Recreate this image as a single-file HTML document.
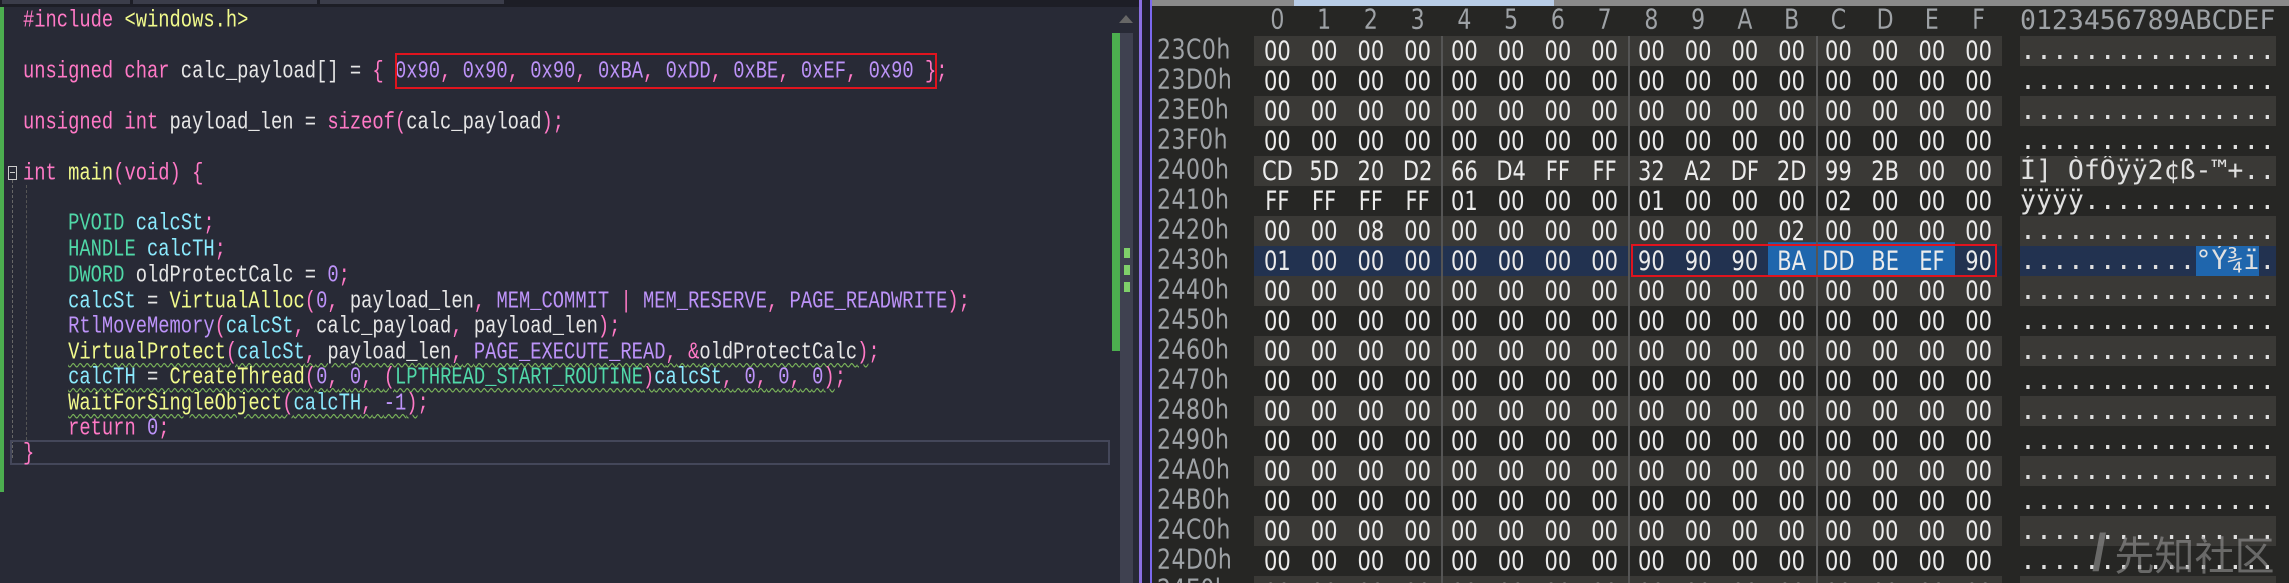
<!DOCTYPE html>
<html style="overflow:hidden;width:2289px;height:583px"><head><meta charset="utf-8"><style>
*{margin:0;padding:0;box-sizing:border-box}
body{width:2289px;height:583px;overflow:hidden;background:#262624;position:relative}
#ed{position:absolute;left:0;top:0;width:1139px;height:583px;background:#282a36;overflow:hidden}
.cl{position:absolute;left:23px;font-family:"Liberation Mono",monospace;font-size:18.8px;white-space:pre;color:#e6e6e6;line-height:26px;height:26px;transform:scaleY(1.28);transform-origin:0 50%}
.k{color:#ff79c6}.n{color:#bd93f9}.t{color:#50d8a8}.f{color:#f1fa8c}.v{color:#8be9fd}.y{color:#f1fa8c}
.sq{text-decoration:underline wavy #7ab35a;text-decoration-thickness:1px;text-underline-offset:3px}
#hx{position:absolute;left:1152px;top:0;width:1137px;height:583px;background:#262624;font-family:"DejaVu Sans",sans-serif;overflow:hidden}
.r{position:absolute;left:0;width:1137px;height:30px}
.off{position:absolute;left:5px;top:0;font-size:22px;color:#9ea2a6;line-height:30px;transform:scale(1.0,1.25);transform-origin:0 50%;letter-spacing:0.5px}
.b{position:absolute;top:0;height:30px;left:102px;width:748px;display:flex}
.b span{width:46.75px;text-align:center;font-size:21px;line-height:30px;color:#ececec;transform:scaleY(1.25)}
.a{position:absolute;top:0;left:868px;width:256px;height:30px;font-family:"DejaVu Sans Mono",monospace;font-size:26.5px;line-height:30px;color:#e0e0e0;white-space:pre;overflow:hidden}
.L .b,.L .a{background:#3a3936}
</style></head><body>
<div id="ed">
<div style="position:absolute;left:0;top:0;width:1139px;height:7px;background:#1d1e26"></div>
<div style="position:absolute;left:2px;top:0;width:128px;height:4px;background:#3b3d4a"></div>
<div style="position:absolute;left:133px;top:0;width:184px;height:4px;background:#3b3d4a"></div>
<div style="position:absolute;left:320px;top:0;width:184px;height:4px;background:#3b3d4a"></div>
<div style="position:absolute;left:0;top:7px;width:4px;height:485px;background:#4cae4f"></div>
<div style="position:absolute;left:1112px;top:33px;width:8px;height:318px;background:#4cae4f"></div>
<div style="position:absolute;left:1120px;top:33px;width:13px;height:550px;background:#3f4150"></div>
<div style="position:absolute;left:1124px;top:248px;width:6px;height:10px;background:#7fd06a"></div>
<div style="position:absolute;left:1124px;top:265px;width:6px;height:10px;background:#7fd06a"></div>
<div style="position:absolute;left:1124px;top:282px;width:6px;height:10px;background:#7fd06a"></div>
<div style="position:absolute;left:1119px;top:15px;width:0;height:0;border-left:7px solid transparent;border-right:7px solid transparent;border-bottom:8px solid #666"></div>
<div style="position:absolute;left:8px;top:166px;width:9px;height:14px;border:1px solid #ccc"></div>
<div style="position:absolute;left:10px;top:172px;width:5px;height:1px;background:#ccc"></div>
<div style="position:absolute;left:12px;top:180px;width:1px;height:278px;border-left:1px dashed #666"></div>
<div style="position:absolute;left:26px;top:185px;width:1px;height:255px;border-left:1px dashed #555"></div>
<div style="position:absolute;left:10px;top:440px;width:1100px;height:25px;border:2px solid #44475a"></div>
<div class="cl" style="top:7px"><span class="k">#include</span> <span class="y">&lt;windows.h&gt;</span></div>
<div class="cl" style="top:58px"><span class="k">unsigned char</span> calc_payload[] = <span class="k">{</span> <span class="n">0x90</span><span class="k">,</span> <span class="n">0x90</span><span class="k">,</span> <span class="n">0x90</span><span class="k">,</span> <span class="n">0xBA</span><span class="k">,</span> <span class="n">0xDD</span><span class="k">,</span> <span class="n">0xBE</span><span class="k">,</span> <span class="n">0xEF</span><span class="k">,</span> <span class="n">0x90</span> <span class="k">};</span></div>
<div style="position:absolute;left:395px;top:53px;width:542px;height:36px;border:2px solid #e0141e"></div>
<div class="cl" style="top:109px"><span class="k">unsigned int</span> payload_len = <span class="k">sizeof(</span>calc_payload<span class="k">);</span></div>
<div class="cl" style="top:160px"><span class="k">int</span> <span class="y">main</span><span class="k">(void)</span> <span class="k">{</span></div>
<div class="cl" style="top:210px">    <span class="t">PVOID</span> <span class="v">calcSt</span><span class="k">;</span></div>
<div class="cl" style="top:236px">    <span class="t">HANDLE</span> <span class="v">calcTH</span><span class="k">;</span></div>
<div class="cl" style="top:262px">    <span class="t">DWORD</span> oldProtectCalc = <span class="n">0</span><span class="k">;</span></div>
<div class="cl" style="top:288px">    <span class="v">calcSt</span> = <span class="f">VirtualAlloc</span><span class="k">(</span><span class="n">0</span><span class="k">,</span> payload_len<span class="k">,</span> <span class="n">MEM_COMMIT</span> <span class="k">|</span> <span class="n">MEM_RESERVE</span><span class="k">,</span> <span class="n">PAGE_READWRITE</span><span class="k">);</span></div>
<div class="cl" style="top:313px">    <span class="n">RtlMoveMemory</span><span class="k">(</span><span class="v">calcSt</span><span class="k">,</span> calc_payload<span class="k">,</span> payload_len<span class="k">);</span></div>
<div class="cl" style="top:339px">    <span class="sq"><span class="f">VirtualProtect</span><span class="k">(</span><span class="v">calcSt</span><span class="k">,</span> payload_len<span class="k">,</span> <span class="n">PAGE_EXECUTE_READ</span><span class="k">,</span> <span class="k">&amp;</span>oldProtectCalc<span class="k">)</span></span><span class="k">;</span></div>
<div class="cl" style="top:364px">    <span class="sq"><span class="v">calcTH</span> = <span class="f">CreateThread</span><span class="k">(</span><span class="n">0</span><span class="k">,</span> <span class="n">0</span><span class="k">,</span> <span class="k">(</span><span class="t">LPTHREAD_START_ROUTINE</span><span class="k">)</span><span class="v">calcSt</span><span class="k">,</span> <span class="n">0</span><span class="k">,</span> <span class="n">0</span><span class="k">,</span> <span class="n">0</span><span class="k">)</span></span><span class="k">;</span></div>
<div class="cl" style="top:390px">    <span class="sq"><span class="f">WaitForSingleObject</span><span class="k">(</span><span class="v">calcTH</span><span class="k">,</span> <span class="n">-1</span><span class="k">)</span></span><span class="k">;</span></div>
<div class="cl" style="top:415px">    <span class="k">return</span> <span class="n">0</span><span class="k">;</span></div>
<div class="cl" style="top:440px"><span class="k">}</span></div>
</div>
<div style="position:absolute;left:1139px;top:0;width:3px;height:583px;background:#8a6fe0"></div>
<div style="position:absolute;left:1142px;top:0;width:8px;height:583px;background:#1e1e2a"></div>
<div style="position:absolute;left:1150px;top:0;width:2px;height:583px;background:#7b68ee"></div>
<div id="hx">
<div style="position:absolute;left:0;top:0;width:1137px;height:6px;background:#8a8a8a"></div>
<div style="position:absolute;left:142px;top:0;width:260px;height:6px;background:#b8cce6"></div>
<div style="position:absolute;left:102px;top:6px;width:1030px;height:28px;font-size:22px;color:#9ea2a6;line-height:30px">
<span style="position:absolute;left:0;display:flex;transform:scaleY(1.25)"><span style="width:46.75px;text-align:center">0</span><span style="width:46.75px;text-align:center">1</span><span style="width:46.75px;text-align:center">2</span><span style="width:46.75px;text-align:center">3</span><span style="width:46.75px;text-align:center">4</span><span style="width:46.75px;text-align:center">5</span><span style="width:46.75px;text-align:center">6</span><span style="width:46.75px;text-align:center">7</span><span style="width:46.75px;text-align:center">8</span><span style="width:46.75px;text-align:center">9</span><span style="width:46.75px;text-align:center">A</span><span style="width:46.75px;text-align:center">B</span><span style="width:46.75px;text-align:center">C</span><span style="width:46.75px;text-align:center">D</span><span style="width:46.75px;text-align:center">E</span><span style="width:46.75px;text-align:center">F</span></span>
<span style="position:absolute;left:766px;font-family:'DejaVu Sans Mono',monospace;font-size:26.5px">0123456789ABCDEF</span></div>

<div class="r L" style="top:36px"><div class="off">23C0h</div><div class="b"><span>00</span><span>00</span><span>00</span><span>00</span><span>00</span><span>00</span><span>00</span><span>00</span><span>00</span><span>00</span><span>00</span><span>00</span><span>00</span><span>00</span><span>00</span><span>00</span></div><div class="a">................</div></div>
<div class="r" style="top:66px"><div class="off">23D0h</div><div class="b"><span>00</span><span>00</span><span>00</span><span>00</span><span>00</span><span>00</span><span>00</span><span>00</span><span>00</span><span>00</span><span>00</span><span>00</span><span>00</span><span>00</span><span>00</span><span>00</span></div><div class="a">................</div></div>
<div class="r L" style="top:96px"><div class="off">23E0h</div><div class="b"><span>00</span><span>00</span><span>00</span><span>00</span><span>00</span><span>00</span><span>00</span><span>00</span><span>00</span><span>00</span><span>00</span><span>00</span><span>00</span><span>00</span><span>00</span><span>00</span></div><div class="a">................</div></div>
<div class="r" style="top:126px"><div class="off">23F0h</div><div class="b"><span>00</span><span>00</span><span>00</span><span>00</span><span>00</span><span>00</span><span>00</span><span>00</span><span>00</span><span>00</span><span>00</span><span>00</span><span>00</span><span>00</span><span>00</span><span>00</span></div><div class="a">................</div></div>
<div class="r L" style="top:156px"><div class="off">2400h</div><div class="b"><span>CD</span><span>5D</span><span>20</span><span>D2</span><span>66</span><span>D4</span><span>FF</span><span>FF</span><span>32</span><span>A2</span><span>DF</span><span>2D</span><span>99</span><span>2B</span><span>00</span><span>00</span></div><div class="a">Í] ÒfÔÿÿ2¢ß-™+..</div></div>
<div class="r" style="top:186px"><div class="off">2410h</div><div class="b"><span>FF</span><span>FF</span><span>FF</span><span>FF</span><span>01</span><span>00</span><span>00</span><span>00</span><span>01</span><span>00</span><span>00</span><span>00</span><span>02</span><span>00</span><span>00</span><span>00</span></div><div class="a">ÿÿÿÿ............</div></div>
<div class="r L" style="top:216px"><div class="off">2420h</div><div class="b"><span>00</span><span>00</span><span>08</span><span>00</span><span>00</span><span>00</span><span>00</span><span>00</span><span>00</span><span>00</span><span>00</span><span>02</span><span>00</span><span>00</span><span>00</span><span>00</span></div><div class="a">................</div></div>
<div class="r" style="top:246px"><div class="off">2430h</div><div class="b" style="background:#223250"><span>01</span><span>00</span><span>00</span><span>00</span><span>00</span><span>00</span><span>00</span><span>00</span><span>90</span><span>90</span><span>90</span><span style="background:#1f66ad">BA</span><span style="background:#1f66ad">DD</span><span style="background:#1f66ad">BE</span><span style="background:#1f66ad">EF</span><span>90</span></div><div class="a" style="background:#223250">...........<span style="background:#1f66ad">°Ý¾ï</span>.</div></div>
<div class="r L" style="top:276px"><div class="off">2440h</div><div class="b"><span>00</span><span>00</span><span>00</span><span>00</span><span>00</span><span>00</span><span>00</span><span>00</span><span>00</span><span>00</span><span>00</span><span>00</span><span>00</span><span>00</span><span>00</span><span>00</span></div><div class="a">................</div></div>
<div class="r" style="top:306px"><div class="off">2450h</div><div class="b"><span>00</span><span>00</span><span>00</span><span>00</span><span>00</span><span>00</span><span>00</span><span>00</span><span>00</span><span>00</span><span>00</span><span>00</span><span>00</span><span>00</span><span>00</span><span>00</span></div><div class="a">................</div></div>
<div class="r L" style="top:336px"><div class="off">2460h</div><div class="b"><span>00</span><span>00</span><span>00</span><span>00</span><span>00</span><span>00</span><span>00</span><span>00</span><span>00</span><span>00</span><span>00</span><span>00</span><span>00</span><span>00</span><span>00</span><span>00</span></div><div class="a">................</div></div>
<div class="r" style="top:366px"><div class="off">2470h</div><div class="b"><span>00</span><span>00</span><span>00</span><span>00</span><span>00</span><span>00</span><span>00</span><span>00</span><span>00</span><span>00</span><span>00</span><span>00</span><span>00</span><span>00</span><span>00</span><span>00</span></div><div class="a">................</div></div>
<div class="r L" style="top:396px"><div class="off">2480h</div><div class="b"><span>00</span><span>00</span><span>00</span><span>00</span><span>00</span><span>00</span><span>00</span><span>00</span><span>00</span><span>00</span><span>00</span><span>00</span><span>00</span><span>00</span><span>00</span><span>00</span></div><div class="a">................</div></div>
<div class="r" style="top:426px"><div class="off">2490h</div><div class="b"><span>00</span><span>00</span><span>00</span><span>00</span><span>00</span><span>00</span><span>00</span><span>00</span><span>00</span><span>00</span><span>00</span><span>00</span><span>00</span><span>00</span><span>00</span><span>00</span></div><div class="a">................</div></div>
<div class="r L" style="top:456px"><div class="off">24A0h</div><div class="b"><span>00</span><span>00</span><span>00</span><span>00</span><span>00</span><span>00</span><span>00</span><span>00</span><span>00</span><span>00</span><span>00</span><span>00</span><span>00</span><span>00</span><span>00</span><span>00</span></div><div class="a">................</div></div>
<div class="r" style="top:486px"><div class="off">24B0h</div><div class="b"><span>00</span><span>00</span><span>00</span><span>00</span><span>00</span><span>00</span><span>00</span><span>00</span><span>00</span><span>00</span><span>00</span><span>00</span><span>00</span><span>00</span><span>00</span><span>00</span></div><div class="a">................</div></div>
<div class="r L" style="top:516px"><div class="off">24C0h</div><div class="b"><span>00</span><span>00</span><span>00</span><span>00</span><span>00</span><span>00</span><span>00</span><span>00</span><span>00</span><span>00</span><span>00</span><span>00</span><span>00</span><span>00</span><span>00</span><span>00</span></div><div class="a">................</div></div>
<div class="r" style="top:546px"><div class="off">24D0h</div><div class="b"><span>00</span><span>00</span><span>00</span><span>00</span><span>00</span><span>00</span><span>00</span><span>00</span><span>00</span><span>00</span><span>00</span><span>00</span><span>00</span><span>00</span><span>00</span><span>00</span></div><div class="a">................</div></div>
<div class="r L" style="top:576px;height:7px;overflow:hidden"><div class="off">24E0h</div><div class="b" style="height:7px"><span>00</span><span>00</span><span>00</span><span>00</span><span>00</span><span>00</span><span>00</span><span>00</span><span>00</span><span>00</span><span>00</span><span>00</span><span>00</span><span>00</span><span>00</span><span>00</span></div><div class="a" style="height:7px">................</div></div>

<div style="position:absolute;left:289px;top:36px;width:2px;height:547px;background:#555"></div>
<div style="position:absolute;left:476px;top:36px;width:2px;height:547px;background:#555"></div>
<div style="position:absolute;left:664px;top:36px;width:2px;height:547px;background:#555"></div>
<div style="position:absolute;left:479px;top:244px;width:366px;height:33px;border:2px solid #e0141e"></div>
<div style="position:absolute;left:940px;top:528px;font-family:'Noto Sans CJK SC',sans-serif;font-size:40px;color:rgba(150,150,150,0.6);line-height:50px;white-space:nowrap"><span style="font-family:'Liberation Sans',sans-serif;font-weight:bold;font-size:52px;margin-right:8px">/</span>先知社区</div>
</div>
</body></html>
